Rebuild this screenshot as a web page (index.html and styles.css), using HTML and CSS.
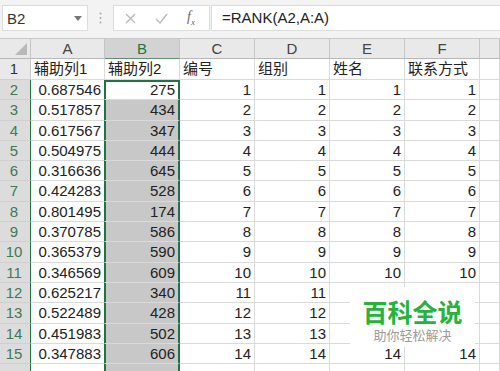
FILE: index.html
```html
<!DOCTYPE html>
<html lang="zh-CN">
<head>
    <meta charset="UTF-8">
    <title>RANK</title>
    <link rel="stylesheet" href="styles.css">
</head>
<body>
    <!-- barra de formula -->
    <div class="bar">
        <div class="namebox">
            <span>B2</span>
            <svg width="8" height="5" viewBox="0 0 8 5"><path d="M0 0h8L4 5z" fill="#777"/></svg>
        </div>
        <div class="grip">
            <svg width="3" height="12" viewBox="0 0 3 12"><circle cx="1.5" cy="1.5" r="1" fill="#aaa"/><circle cx="1.5" cy="6" r="1" fill="#aaa"/><circle cx="1.5" cy="10.5" r="1" fill="#aaa"/></svg>
        </div>
        <div class="fxbox">
            <svg width="11" height="11" viewBox="0 0 11 11"><path d="M1 1l9 9M10 1l-9 9" stroke="#b8b8b8" stroke-width="1.3"/></svg>
            <svg width="13" height="11" viewBox="0 0 13 11"><path d="M1 6l4 4 7-9" stroke="#b8b8b8" stroke-width="1.3" fill="none"/></svg>
            <span class="fx">f<sub>x</sub></span>
        </div>
        <div class="formula">=RANK(A2,A:A)</div>
    </div>

    <div class="sheet">
        <div class="h corner"><span class="tri"></span></div>
        <div class="h">A</div><div class="h on">B</div><div class="h">C</div><div class="h">D</div><div class="h">E</div><div class="h">F</div><div class="h"></div>

        <div class="r">1</div>
        <div class="c t">辅助列1</div><div class="c t">辅助列2</div><div class="c t">编号</div><div class="c t">组别</div><div class="c t">姓名</div><div class="c t">联系方式</div><div class="c"></div>

        <div class="r on">2</div>
        <div class="c a">0.687546</div><div class="c b b2">275</div><div class="c">1</div><div class="c">1</div><div class="c">1</div><div class="c">1</div><div class="c"></div>

        <div class="r on">3</div>
        <div class="c a">0.517857</div><div class="c b">434</div><div class="c">2</div><div class="c">2</div><div class="c">2</div><div class="c">2</div><div class="c"></div>

        <div class="r on">4</div>
        <div class="c a">0.617567</div><div class="c b">347</div><div class="c">3</div><div class="c">3</div><div class="c">3</div><div class="c">3</div><div class="c"></div>

        <div class="r on">5</div>
        <div class="c a">0.504975</div><div class="c b">444</div><div class="c">4</div><div class="c">4</div><div class="c">4</div><div class="c">4</div><div class="c"></div>

        <div class="r on">6</div>
        <div class="c a">0.316636</div><div class="c b">645</div><div class="c">5</div><div class="c">5</div><div class="c">5</div><div class="c">5</div><div class="c"></div>

        <div class="r on">7</div>
        <div class="c a">0.424283</div><div class="c b">528</div><div class="c">6</div><div class="c">6</div><div class="c">6</div><div class="c">6</div><div class="c"></div>

        <div class="r on">8</div>
        <div class="c a">0.801495</div><div class="c b">174</div><div class="c">7</div><div class="c">7</div><div class="c">7</div><div class="c">7</div><div class="c"></div>

        <div class="r on">9</div>
        <div class="c a">0.370785</div><div class="c b">586</div><div class="c">8</div><div class="c">8</div><div class="c">8</div><div class="c">8</div><div class="c"></div>

        <div class="r on">10</div>
        <div class="c a">0.365379</div><div class="c b">590</div><div class="c">9</div><div class="c">9</div><div class="c">9</div><div class="c">9</div><div class="c"></div>

        <div class="r on">11</div>
        <div class="c a">0.346569</div><div class="c b">609</div><div class="c">10</div><div class="c">10</div><div class="c">10</div><div class="c">10</div><div class="c"></div>

        <div class="r on">12</div>
        <div class="c a">0.625217</div><div class="c b">340</div><div class="c">11</div><div class="c">11</div><div class="c"></div><div class="c"></div><div class="c"></div>

        <div class="r on">13</div>
        <div class="c a">0.522489</div><div class="c b">428</div><div class="c">12</div><div class="c">12</div><div class="c"></div><div class="c"></div><div class="c"></div>

        <div class="r on">14</div>
        <div class="c a">0.451983</div><div class="c b">502</div><div class="c">13</div><div class="c">13</div><div class="c"></div><div class="c"></div><div class="c"></div>

        <div class="r on">15</div>
        <div class="c a">0.347883</div><div class="c b">606</div><div class="c">14</div><div class="c">14</div><div class="c">14</div><div class="c">14</div><div class="c"></div>

        <div class="r on"></div>
        <div class="c a"></div><div class="c b"></div><div class="c"></div><div class="c"></div><div class="c"></div><div class="c"></div><div class="c"></div>

        <!-- marca d'agua por cima das celulas -->
        <div class="mark">
            <div class="mark-title">百科全说</div>
            <div class="mark-sub">助你轻松解决</div>
        </div>
    </div>
</body>
</html>
```

FILE: styles.css
```css
* {
  margin: 0;
  padding: 0;
  box-sizing: border-box;
}

body {
  width: 500px;
  height: 371px;
  overflow: hidden;
  background: #fff;
  font-family: "Liberation Sans", "Noto Sans CJK SC", sans-serif;
  color: #222;
}

.bar {
  height: 38px;
  background: #f3f3f3;
  display: flex;
  align-items: flex-start;
  padding: 5px 0 0 2px;
}

.namebox {
  width: 86px;
  height: 26px;
  background: #fff;
  border: 1px solid #dcdcdc;
  display: flex;
  align-items: center;
  justify-content: space-between;
  padding: 0 5px 0 4px;
  font-size: 15px;
  color: #333;
}

.grip {
  width: 25px;
  height: 26px;
  display: flex;
  align-items: center;
  justify-content: center;
}

.fxbox {
  width: 97px;
  height: 26px;
  background: #fff;
  border: 1px solid #dcdcdc;
  display: flex;
  align-items: center;
  gap: 19px;
  padding-left: 11px;
}

.fx {
  font-family: "Liberation Serif", serif;
  font-style: italic;
  font-size: 14px;
  color: #666;
}

.fx sub {
  font-size: 9px;
}

.formula {
  flex: 1;
  height: 26px;
  margin-left: 1px;
  background: #fff;
  border: 1px solid #dcdcdc;
  border-right: none;
  padding-left: 10px;
  font-size: 15px;
  line-height: 24px;
  color: #222;
}

.sheet {
  position: relative;
  display: grid;
  grid-template-columns: 31px 74px 75px 75px 75px 75px 75px 20px;
  grid-template-rows: 20px 21px repeat(15, 20.3px);
  font-size: 15px;
  border-top: 1px solid #c8c8c8;
}

.h {
  background: #e9e9e9;
  border-right: 1px solid #c6c6c6;
  border-bottom: 1px solid #b8b8b8;
  text-align: center;
  line-height: 19px;
  color: #444;
}

.h.on {
  background: #d3d3d3;
  color: #217346;
  border-bottom: 1px solid #5d8f72;
}

.corner {
  position: relative;
}

.tri {
  position: absolute;
  right: 3px;
  bottom: 3px;
  border-style: solid;
  border-width: 0 0 12px 12px;
  border-color: transparent transparent #b9b9b9 transparent;
}

.r {
  background: #e9e9e9;
  border-right: 1px solid #c6c6c6;
  border-bottom: 1px solid #cfcfcf;
  text-align: center;
  padding-right: 2px;
  line-height: 20px;
  color: #333;
}

.r.on {
  background: #dcdcdc;
  color: #3d7a58;
  border-right-color: #217346;
}

.c {
  border-right: 1px solid #dadada;
  border-bottom: 1px solid #dadada;
  text-align: right;
  padding: 0 3px;
  line-height: 20px;
  white-space: nowrap;
  overflow: hidden;
}

.c.t {
  text-align: left;
}

.c.a {
  border-right-color: #217346;
}

.c.b {
  background: #c8c8c8;
  border-right: 2px solid #217346;
  box-shadow: inset 1px 0 0 #217346;
}

.c.b2 {
  background: #fff;
  box-shadow: inset 1px 2px 0 #217346;
}

.mark {
  position: absolute;
  left: 350px;
  top: 248px;
  width: 125px;
  height: 60px;
  background: #fff;
  display: flex;
  flex-direction: column;
  align-items: center;
  justify-content: flex-end;
  padding-bottom: 3px;
  gap: 1px;
}

.mark-title {
  font-size: 25px;
  font-weight: bold;
  color: #25b33d;
  line-height: 28px;
}

.mark-sub {
  font-size: 13px;
  color: #9b9b9b;
  line-height: 16px;
}
```
